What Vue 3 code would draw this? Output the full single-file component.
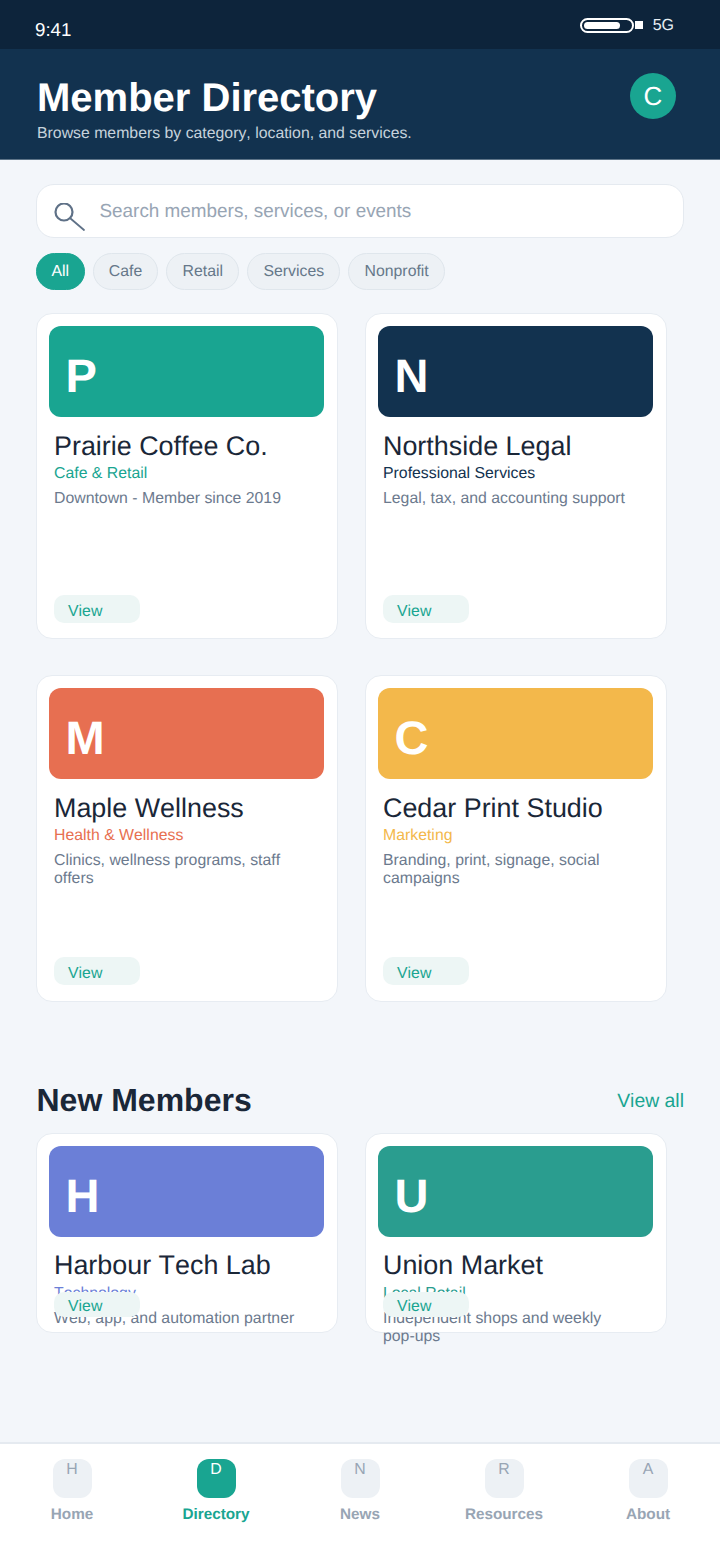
<script setup>
const chips = ['All', 'Cafe', 'Retail', 'Services', 'Nonprofit']
const members = [
  { l: 'P', name: 'Prairie Coffee Co.', cat: 'Cafe & Retail', desc: 'Downtown - Member since 2019', color: '#19a591' },
  { l: 'N', name: 'Northside Legal', cat: 'Professional Services', desc: 'Legal, tax, and accounting support', color: '#12324f' },
  { l: 'M', name: 'Maple Wellness', cat: 'Health & Wellness', desc: 'Clinics, wellness programs, staff offers', color: '#e76f51' },
  { l: 'C', name: 'Cedar Print Studio', cat: 'Marketing', desc: 'Branding, print, signage, social campaigns', color: '#f3b84b' }
]
const fresh = [
  { l: 'H', name: 'Harbour Tech Lab', cat: 'Technology', desc: 'Web, app, and automation partner', color: '#6b7fd7' },
  { l: 'U', name: 'Union Market', cat: 'Local Retail', desc: 'Independent shops and weekly pop-ups', color: '#2a9d8f' }
]
const nav = [
  { l: 'H', t: 'Home' }, { l: 'D', t: 'Directory', on: true }, { l: 'N', t: 'News' }, { l: 'R', t: 'Resources' }, { l: 'A', t: 'About' }
]
</script>

<template>
  <div class="page">
    <div class="status">
      <span class="time">9:41</span>
      <div class="status-right">
        <span class="batt"><i></i></span><span class="cap"></span><span class="net">5G</span>
      </div>
    </div>
    <header class="head">
      <div>
        <h1>Member Directory</h1>
        <p>Browse members by category, location, and services.</p>
      </div>
      <div class="avatar">C</div>
    </header>
    <main class="main">
      <div class="search">
        <svg width="32" height="32" viewBox="0 0 32 32" fill="none" stroke="#5f7187" stroke-linecap="round"><circle cx="10" cy="9" r="8.5" stroke-width="2.2"/><path d="M16.5 15.5 L30 27" stroke-width="1.8"/></svg>
        <span>Search members, services, or events</span>
      </div>
      <div class="chips">
        <span v-for="(c, i) in chips" :key="c" class="chip" :class="{ on: i === 0 }">{{ c }}</span>
      </div>
      <div class="grid">
        <article v-for="m in members" :key="m.name" class="card">
          <div class="banner" :style="{ background: m.color }">{{ m.l }}</div>
          <h3>{{ m.name }}</h3>
          <div class="cat" :style="{ color: m.color }">{{ m.cat }}</div>
          <div class="desc">{{ m.desc }}</div>
          <span class="view">View</span>
        </article>
      </div>
      <div class="sec">
        <h2>New Members</h2>
        <span>View all</span>
      </div>
      <div class="grid">
        <article v-for="m in fresh" :key="m.name" class="card short">
          <div class="banner" :style="{ background: m.color }">{{ m.l }}</div>
          <h3>{{ m.name }}</h3>
          <div class="cat" :style="{ color: m.color }">{{ m.cat }}</div>
          <div class="desc">{{ m.desc }}</div>
          <span class="view">View</span>
        </article>
      </div>
    </main>
    <nav class="nav">
      <div v-for="n in nav" :key="n.t" class="item" :class="{ on: n.on }">
        <span class="ic">{{ n.l }}</span>
        <span class="lb">{{ n.t }}</span>
      </div>
    </nav>
  </div>
</template>

<style>
html, body { margin: 0; background: #f3f6fa; }
</style>
<style scoped>
* { box-sizing: border-box; }
.page {
  width: 720px; height: 1560px; display: flex; flex-direction: column; overflow: hidden;
  background: #f3f6fa; font-family: "Liberation Sans", Arial, sans-serif; text-rendering: geometricPrecision; font-kerning: none;
}
.status {
  height: 49px; flex: none; background: #0d243b; color: #fff; position: relative;
  display: flex; justify-content: space-between; padding: 0 46px 0 35px;
}
.time { font-size: 18.7px; line-height: 23px; margin-top: 17.5px; }
.status-right { display: flex; align-items: center; height: 50px; }
.batt {
  width: 54px; height: 15px; border: 2px solid #fff; border-radius: 8px; padding: 2px; display: block;
}
.batt i { display: block; width: 36px; height: 7px; background: #fff; border-radius: 4px; }
.cap { width: 7.5px; height: 8px; background: #fff; margin-left: 1.5px; }
.net { font-size: 16px; line-height: 18px; margin: 1px 0 0 10px; color: #e8eef3; }
.head {
  height: 111px; flex: none; background: #12324f; border-bottom: 1px solid #5d7488;
  display: flex; justify-content: space-between; padding: 28px 44px 0 37px;
}
.head h1 { margin: 0; font-size: 40px; line-height: 42px; font-weight: 700; color: #fff; }
.head p { margin: 5.5px 0 0; font-size: 15.84px; line-height: 18px; color: #c6d2dc; }
.avatar {
  width: 46px; height: 46px; margin-top: -4px; border-radius: 50%; background: #19a591; color: #fff;
  font-size: 26px; display: flex; align-items: center; justify-content: center;
}
.main { flex: 1; min-height: 0; padding: 24px 36px 0; }
.search {
  height: 54px; background: #fff; border: 1px solid #e5eaf0; border-radius: 18px;
  display: flex; align-items: center; padding: 0 0 0 17px; font-size: 18.9px; color: #98a5b4;
}
.search svg { margin-top: 16px; margin-right: 13.5px; flex: none; }
.search span { margin-top: 1px; }
.chips { display: flex; gap: 8px; margin-top: 15px; }
.chip {
  height: 37px; padding: 1px 15.2px 0; border-radius: 18.5px; background: #edf1f5; border: 1px solid #dfe6ec;
  color: #66788a; font-size: 15.84px; display: flex; align-items: center;
}
.chip.on { background: #19a591; border-color: #19a591; color: #fff; padding: 1px 14.5px 0; }
.grid { display: grid; grid-template-columns: 301.5px 301.5px; column-gap: 27.5px; row-gap: 36px; margin-top: 23px; }
.card {
  position: relative; height: 326.4px; background: #fff; border: 1px solid #e7ecf2; border-radius: 16px; padding: 12px;
}
.card.short { height: 200px; }
.banner {
  height: 91px; margin-right: .6px; border-radius: 12px; color: #fff; font-size: 47px; font-weight: 700; line-height: 99px; padding-left: 16.5px;
}
.card h3 { margin: 12.5px 0 0 5px; font-size: 26.9px; line-height: 32px; font-weight: 400; color: #1a2738; }
.cat { margin: 3.5px 0 0 5px; font-size: 15.84px; line-height: 18px; }
.desc { margin: 7px 0 0 5px; max-width: 250px; font-size: 15.84px; line-height: 18px; color: #6c7a8e; }
.view {
  position: absolute; left: 17px; bottom: 15.4px; width: 86px; height: 28px; background: #edf6f5; border-radius: 10px;
  color: #19a591; font-size: 15.84px; line-height: 33px; padding-left: 14px;
}
.short .view { bottom: 15px; height: 25px; line-height: 29px; overflow: hidden; }
.sec { display: flex; justify-content: space-between; align-items: center; margin-top: 78.2px; height: 40px; }
.sec h2 { margin: 0 0 0 .5px; font-size: 32px; line-height: 38px; font-weight: 700; color: #1a2738; }
.sec span { margin-top: 3px; font-size: 19.4px; color: #19a591; }
.sec + .grid { margin-top: 13px; }
.nav {
  height: 118px; flex: none; background: #fff; border-top: 2px solid #e5eaf0; display: flex; padding-top: 15px;
}
.item { width: 144px; display: flex; flex-direction: column; align-items: center; }
.ic {
  width: 39px; height: 39px; border-radius: 12px; background: #edf1f5; color: #98a5b4; font-size: 15.84px;
  text-align: center; line-height: 21px;
}
.lb { margin-top: 8px; font-size: 15.3px; line-height: 18px; font-weight: 700; color: #98a5b4; }
.item.on .ic { background: #19a591; color: #fff; }
.item.on .lb { color: #19a591; }
</style>
